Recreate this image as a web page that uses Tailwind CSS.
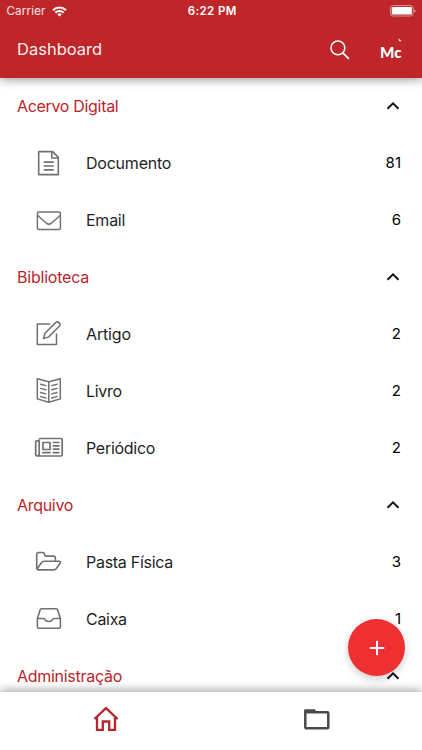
<!DOCTYPE html>
<html lang="pt-BR">
<head>
<meta charset="utf-8">
<title>Dashboard</title>
<script src="https://cdn.jsdelivr.net/npm/@tailwindcss/browser@4"></script>
</head>
<body class="bg-white font-['Inter','Liberation_Sans',sans-serif] text-[#1f1f1f]">
<div class="relative flex h-[750px] w-[422px] flex-col overflow-hidden bg-white">
  <header class="relative z-10 flex h-[78px] shrink-0 flex-col bg-[#be2629] text-white shadow-[0_2px_9px_rgba(0,0,0,0.38)]">
    <div class="grid h-[22px] grid-cols-3 items-center pr-[6px] pl-[6.5px] text-[11.5px] leading-none">
      <div class="flex items-center gap-[6px] text-white/90"><span class="pt-[2px] tracking-[0.2px]">Carrier</span>
        <svg class="h-[11px] w-[15px]" viewBox="0 0 15 11" fill="none" stroke="#fff" stroke-width="2.2"><path d="M1 4.2a9.2 9.2 0 0 1 13 0M3.4 6.7a5.8 5.8 0 0 1 8.2 0"/><path d="M5.3 8.4a3.1 3.1 0 0 1 4.4 0L7.5 10.6z" fill="#fff" stroke="none"/></svg>
      </div>
      <div class="pt-[2px] pl-[2px] text-center font-semibold tracking-[0.4px]">6:22 PM</div>
      <div class="flex justify-end"><svg class="h-[12px] w-[27px]" viewBox="0 0 27 12"><rect x="1.4" y=".6" width="22.8" height="10.4" rx="2.8" fill="none" stroke="#fff" stroke-opacity=".5"/><rect x="2.8" y="2" width="20" height="7.6" rx="1.2" fill="#fff"/><path d="M25.3 4.2q1.2.5 1.2 1.7t-1.2 1.7z" fill="#fff" fill-opacity=".6"/></svg></div>
    </div>
    <div class="flex h-[55px] items-center pr-[18px] pl-[17px]">
      <h1 class="flex-1 text-[16.5px] font-normal text-white/95">Dashboard</h1>
      <svg class="mr-[29px] h-[20px] w-[20px]" viewBox="0 0 20 20" fill="none" stroke="#fff" stroke-width="1.5" stroke-linecap="round"><circle cx="7.9" cy="7.9" r="6.9"/><path d="M12.8 12.8l5.6 5.6" stroke-width="1.8"/></svg>
      <svg class="h-[26px] w-[25px]" viewBox="0 0 25 26"><text x="1" y="21" textLength="21.5" lengthAdjust="spacingAndGlyphs" class="fill-white font-[Lato] text-[15.5px] font-black">Mc</text><path d="M19.6 1.2l3.2 3h-2.8z" fill="#fff" fill-opacity=".9"/></svg>
    </div>
  </header>

  <main class="-mt-px h-[615px] shrink-0 overflow-hidden text-[16px]">
    <section>
      <div class="flex h-[57px] items-center justify-between pr-[22px] pl-[17px] text-[#b92529]"><h2 class="tracking-[-0.32px]">Acervo Digital</h2><svg class="h-2 w-[14px]" viewBox="0 0 14 8" fill="none" stroke="#151515" stroke-width="2"><path d="M1.5 6.8L7 1.4l5.5 5.4"/></svg></div>
      <div class="flex h-[57px] items-center pr-[21px] pl-[34px]">
        <svg class="h-[30px] w-[30px]" viewBox="0 0 30 30" fill="none" stroke="#717171" stroke-width="1.6" stroke-linejoin="round"><path d="M4.7 3.6h14l5.6 5.8v17.2H4.7zM17.8 3.6V10h6.3M9.7 14.1h10M9.7 18h10M9.7 21.9h10"/></svg>
        <span class="ml-[22px] flex-1 tracking-[-0.22px]">Documento</span><span class="pt-[2px] text-[15px] text-black">81</span></div>
      <div class="flex h-[57px] items-center pr-[21px] pl-[34px]">
        <svg class="h-[30px] w-[30px]" viewBox="0 0 30 30" fill="none" stroke="#717171" stroke-width="1.5" stroke-linejoin="round"><rect x="3.4" y="7" width="23" height="17.6" rx="1.5"/><path d="M3.5 10.3l8.9 7.9q2.5 2 5 0l8.9-7.9"/></svg>
        <span class="ml-[22px] flex-1 tracking-[-0.25px]">Email</span><span class="pt-[2px] text-[15px] text-black">6</span></div>
    </section>
    <section>
      <div class="flex h-[57px] items-center justify-between pr-[22px] pl-[17px] text-[#b92529]"><h2 class="tracking-[-0.22px]">Biblioteca</h2><svg class="h-2 w-[14px]" viewBox="0 0 14 8" fill="none" stroke="#151515" stroke-width="2"><path d="M1.5 6.8L7 1.4l5.5 5.4"/></svg></div>
      <div class="flex h-[57px] items-center pr-[21px] pl-[34px]">
        <svg class="h-[30px] w-[30px]" viewBox="0 0 30 30" fill="none" stroke="#717171" stroke-width="1.5" stroke-linejoin="round" stroke-linecap="round"><path d="M15.5 4.9H3.3v20.7h19.2V15"/><path d="M9.4 19.6l1.6-5.4L21.6 3.6q1.7-1.5 3.5 0 1.8 1.8.2 3.7L14.7 17.9z"/></svg>
        <span class="ml-[22px] flex-1 tracking-[-0.15px]">Artigo</span><span class="pt-[2px] text-[15px] text-black">2</span></div>
      <div class="flex h-[57px] items-center pr-[21px] pl-[34px]">
        <svg class="h-[30px] w-[30px]" viewBox="0 0 30 30" fill="none" stroke="#717171" stroke-width="1.5" stroke-linejoin="round" stroke-linecap="round"><path d="M14.8 5.8L3.3 2.8v20.1l11.5 3.3 11.5-3.3V2.8zM14.8 5.8V26M6.6 8.2l5.2 1.4M6.6 12.4l5.2 1.4M6.6 16.5l5.2 1.4M6.6 20.6l5.2 1.4M23 8.2l-5.2 1.4M23 12.4l-5.2 1.4M23 16.5l-5.2 1.4M23 20.6L17.8 22"/></svg>
        <span class="ml-[22px] flex-1 tracking-[-0.3px]">Livro</span><span class="pt-[2px] text-[15px] text-black">2</span></div>
      <div class="flex h-[57px] items-center pr-[21px] pl-[34px]">
        <svg class="h-[30px] w-[30px]" viewBox="0 0 30 30" fill="none" stroke="#717171" stroke-width="1.7" stroke-linejoin="round"><path d="M5.2 6.7q0-1.2 1.2-1.2h20.7q1.1 0 1.1 1.1v15.2q0 1.2-1.2 1.2H3.6q-1.9 0-1.9-1.8V9q0-1.2 1.3-1.2h2.2v13q0 2-1.5 2"/><rect x="9" y="9.5" width="7" height="7"/><path d="M18.7 9.5h6.8M18.7 12.8h6.8M18.7 16.1h6.8M8.2 19.7h8.4M18.7 19.7h6.8"/></svg>
        <span class="ml-[22px] flex-1 tracking-[-0.28px]">Periódico</span><span class="pt-[2px] text-[15px] text-black">2</span></div>
    </section>
    <section>
      <div class="flex h-[57px] items-center justify-between pr-[22px] pl-[17px] text-[#b92529]"><h2 class="tracking-[-0.3px]">Arquivo</h2><svg class="h-2 w-[14px]" viewBox="0 0 14 8" fill="none" stroke="#151515" stroke-width="2"><path d="M1.5 6.8L7 1.4l5.5 5.4"/></svg></div>
      <div class="flex h-[57px] items-center pr-[21px] pl-[34px]">
        <svg class="h-[30px] w-[30px]" viewBox="0 0 30 30" fill="none" stroke="#717171" stroke-width="1.6" stroke-linejoin="round"><path d="M2.7 22V7.5q0-2 2-2h3.9q2 0 2 2v.6q0 1 1 1h7.8q2 0 2 2v3M3 22.2L7.1 16q1.2-1.8 3.2-1.8h15q1.9 0 .9 1.8l-3.6 5.3q-1.1 1.6-3 1.6H4.3Q2.7 22.9 2.7 21.6"/></svg>
        <span class="ml-[22px] flex-1 tracking-[-0.28px]">Pasta Física</span><span class="pt-[2px] text-[15px] text-black">3</span></div>
      <div class="flex h-[57px] items-center pr-[21px] pl-[34px]">
        <svg class="h-[30px] w-[30px]" viewBox="0 0 30 30" fill="none" stroke="#717171" stroke-width="1.6" stroke-linejoin="round"><path d="M3.4 14.5l2.8-8.8q.3-1 1.3-1h14.8q1 0 1.3 1l2.8 8.8v8.3q0 1.4-1.4 1.4H4.8q-1.4 0-1.4-1.4zM3.4 14.5h6.3q.8 0 1.1.8.9 2.2 4 2.2t4-2.2q.3-.8 1.1-.8h6.3"/></svg>
        <span class="ml-[22px] flex-1 tracking-[-0.3px]">Caixa</span><span class="pt-[2px] text-[15px] text-black">1</span></div>
    </section>
    <section>
      <div class="flex h-[57px] items-center justify-between pr-[22px] pl-[17px] text-[#b92529]"><h2 class="tracking-[-0.28px]">Administração</h2><svg class="h-2 w-[14px]" viewBox="0 0 14 8" fill="none" stroke="#151515" stroke-width="2"><path d="M1.5 6.8L7 1.4l5.5 5.4"/></svg></div>
    </section>
  </main>

  <button aria-label="Adicionar" class="absolute top-[619px] left-[348px] flex h-[57px] w-[57px] items-center justify-center rounded-full bg-[#ee3032] shadow-[0_3px_9px_rgba(0,0,0,0.2)]">
    <svg class="h-[16px] w-[16px]" viewBox="0 0 16 16" stroke="#fff" stroke-width="1.9"><path d="M8 .8v14.4M.8 8h14.4"/></svg>
  </button>

  <nav class="relative z-10 grid h-[58px] shrink-0 grid-cols-2 bg-white shadow-[0_-2px_9px_rgba(0,0,0,0.35)]">
    <a class="flex justify-center pt-[14px]"><svg class="h-[26px] w-[26px]" viewBox="0 0 26 26" fill="none" stroke="#b3272b" stroke-width="2.3"><path d="M1.4 13L13 2.1 24.6 13M4 11v12.8h5.8v-8.3h6.4v8.3H22V11"/></svg></a>
    <a class="flex justify-center pt-[14px]"><svg class="h-[26px] w-[26px]" viewBox="0 0 26 26" fill="none" stroke="#4a4a4a" stroke-width="2.5" stroke-linejoin="round"><rect x="1.3" y="6.3" width="23" height="16" rx="1"/><path d="M1.3 7V4.4h8.7l2 2" fill="#4a4a4a"/></svg></a>
  </nav>
</div>
</body>
</html>
